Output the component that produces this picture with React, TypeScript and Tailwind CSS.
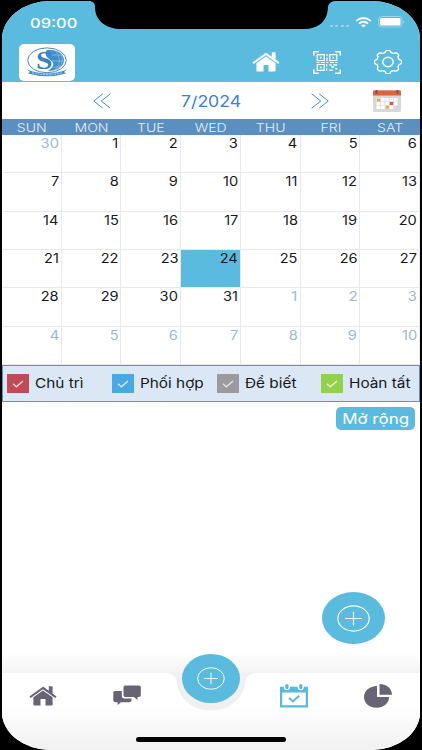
import React from 'react';

interface DayCellProps {
  day: number;
  outside: boolean;
  selected: boolean;
}

const WEEKDAYS = ['SUN', 'MON', 'TUE', 'WED', 'THU', 'FRI', 'SAT'];

const DAYS = Array.from({ length: 42 }, (_, i) => {
  if (i === 0) return { day: 30, outside: true };
  if (i > 31) return { day: i - 31, outside: true };
  return { day: i, outside: false };
});

const LEGEND = [
  { label: 'Chủ trì', color: 'bg-[#be4b55]', width: 'w-[104.5px]' },
  { label: 'Phối hợp', color: 'bg-[#4aa9e2]', width: 'w-[105px]' },
  { label: 'Để biết', color: 'bg-[#9b9b9d]', width: 'w-[104.5px]' },
  { label: 'Hoàn tất', color: 'bg-[#92d14b]', width: 'w-[96px]' },
];

// eight rounded teeth around a 28x24 ellipse
const GEAR_PATH = Array.from({ length: 120 }, (_, i) => {
  const angle = (i / 120) * Math.PI * 2;
  const r = 0.89 + 0.085 * Math.tanh(2 * Math.cos(8 * angle));
  return `${i === 0 ? 'M' : 'L'}${(14 + 14 * r * Math.cos(angle)).toFixed(2)} ${(12 + 12 * r * Math.sin(angle)).toFixed(2)}`;
}).join('') + 'Z';

const HomeIcon: React.FC<{ className?: string }> = ({ className }) => (
  <svg viewBox="0 0 28 20" preserveAspectRatio="none" className={className} fill="currentColor">
    <path d="M13.9 0.7 0.4 10.4l1.3 1.5L13.9 3.2l12.3 8.7 1.3-1.5-3.9-2.9V0.3h-3.8v4.4L15.1 1.2q-.6-.5-1.2-.5Z" />
    <path d="M13.9 4.6 4.4 11.3v7.1q0 1 1 1h6.1v-6.3h5v6.3h6.1q1 0 1-1v-7.1Z" />
  </svg>
);

const QrIcon: React.FC = () => (
  <svg viewBox="0 0 28 23" className="w-7 h-[23px]" fill="none" stroke="white">
    <path d="M.8 4.5V.8h5M22.2.8h5v3.7M.8 18.5v3.7h5M22.2 22.2h5v-3.7" strokeWidth="1.5" />
    <path d="M4.2 3.7h7v5.8h-7ZM16.8 3.7h7v5.8h-7ZM4.2 13.5h7v5.8h-7Z" strokeWidth="1.2" />
    <path d="M6.8 6.6h1.8M19.4 6.6h1.8M6.8 16.4h1.8" strokeWidth="1.6" />
    <path d="M14 3v2M14 6.5v3.4M3.6 11.5h3M8 11.5h4M13.2 11.5h2.3M17 11.5h4M22.5 11.5h1.9M13.7 13.3v2.3M13.7 17.2v2.5" strokeWidth="1.2" />
    <path d="M16.3 14h2.3M20.5 14h3.6M18.2 16h3M16.2 19.2h3.6M22.3 17.8h2" strokeWidth="1.5" />
  </svg>
);

const GearIcon: React.FC = () => (
  <svg viewBox="0 0 28 24" className="w-7 h-6" fill="none" stroke="white" strokeWidth="1.4">
    <path d={GEAR_PATH} strokeLinejoin="round" />
    <ellipse cx="14" cy="12" rx="5.3" ry="4.7" />
  </svg>
);

const ChatIcon: React.FC = () => (
  <svg viewBox="0 0 28 21" className="w-7 h-[21px]" fill="#686475">
    <path d="M2 6h6.8v5.1q0 2.3 2.4 2.3h7.3v1.8q0 2-2 2H8l-3.4 2.7v-2.7H2.3q-2 0-2-2V7.9Q.3 6 2 6Z" />
    <path d="M12.2.4h14q1.6 0 1.6 1.7v8.1q0 1.8-1.8 1.8h-1.5v2.9L20.8 12h-8.6q-1.7 0-1.7-1.8V2.1q0-1.7 1.7-1.7Z" />
  </svg>
);

const CalendarCheckIcon: React.FC = () => (
  <svg viewBox="0 0 28 24" className="w-7 h-6" fill="#57b9dd">
    <path fillRule="evenodd" d="M0 2.7h3.8v1q.5 2.5 3.1 2.5T10 3.7v-1h7.6v1q.5 2.5 3.2 2.5t3.1-2.5v-1H28v20.8H0ZM2.2 8.6v12.6h23.6V8.6Z" />
    <rect x="5.3" y="0" width="3.2" height="5.2" rx="1.6" />
    <rect x="19.2" y="0" width="3.2" height="5.2" rx="1.6" />
    <path d="m9 14 4 3.3 6.2-5.6" fill="none" stroke="#57b9dd" strokeWidth="2" />
  </svg>
);

const PieIcon: React.FC = () => (
  <svg viewBox="0 0 28 24" className="w-7 h-6" fill="#686475">
    <path d="M13 2v11h12.2c-.4 6.2-5.6 10.8-12.5 10.8C5.4 23.8 0 19.2 0 13 0 6.8 5.4 2.2 13 2Z" />
    <path d="M15.5 0c7 0 12.2 4.2 12.5 10.8H15.5Z" />
  </svg>
);

const PlusCircle: React.FC<{ className?: string }> = ({ className }) => (
  <svg viewBox="0 0 32 28" preserveAspectRatio="none" className={className} fill="none" stroke="white" strokeWidth="1.1">
    <ellipse cx="16" cy="14" rx="15.2" ry="13.1" />
    <path d="M8 14h16M16 7v14" />
  </svg>
);

const Logo: React.FC = () => (
  <svg viewBox="0 0 42 30" className="w-[42px] h-[30px] overflow-visible">
    <ellipse cx="21" cy="13.3" rx="19.3" ry="12.4" fill="white" stroke="#468bc5" strokeWidth="1" />
    <path d="M21 3c12-1 17 5 17 10.3S32 24 22 24c7-5 7-8 1-12Q17 7 21 3Z" fill="#408dcc" />
    <path d="M26 8h10M26 14h13M26 20h9M27 2c8 6 9 17 0 22M33 3c5 7 4 16-2 20" fill="none" stroke="#a9cee9" strokeWidth=".6" />
    <text x="10" y="22.2" textLength="16.5" lengthAdjust="spacingAndGlyphs" fontFamily="Liberation Serif, serif" fontWeight="bold" fontSize="26" fill="#3b82bd">S</text>
    <path d="M1 22.5q20 8 40 0l-3 2.5 2 1.5q-19 5.500-38 0L4 25Z" fill="#438ac2" />
    <path d="M6 25.8q15 4 30 0" fill="none" stroke="#b9d8ee" strokeWidth="1" strokeDasharray="2 .8" />
  </svg>
);

const CalendarIcon: React.FC = () => (
  <svg viewBox="0 0 28 22" className="w-7 h-[22px]">
    <rect width="28" height="22" rx="1.5" fill="#d5d8dc" />
    <path d="M0 5.5V1.5Q0 .5 1 .5h26q1 0 1 1v4Z" fill="#e3603c" />
    <path d="M3.5 0v3M24.5 0v3" stroke="#555c68" strokeWidth="1.8" strokeLinecap="round" />
    <path d="M8 8h16.5v7.5H21V19H3.5V8Z" fill="white" />
    <path d="M3.5 11.7h21M3.5 15.3H21M7.7 8v11M12 8v11M16.3 8v11M20.5 8v11" stroke="#d5d8dc" strokeWidth=".7" />
    <path d="M3.8 8.6h3.5v3H3.8ZM12.5 15.7H16v3h-3.5Z" fill="#eea557" />
    <path d="M16.7 12h3.5v3h-3.5Z" fill="#dc5936" />
  </svg>
);

const Chevrons: React.FC<{ className?: string }> = ({ className }) => (
  <svg viewBox="0 0 18 16" className={`w-[18px] h-4 ${className ?? ''}`} fill="none" stroke="#4289dd" strokeWidth="1">
    <path d="M9.8.8.8 8l9 7.2M17.3.8l-9 7.2 9 7.2" />
  </svg>
);

const StatusBar: React.FC = () => (
  <div className="h-[42px] flex items-start justify-between pl-7 pr-[15px] pt-[12px] text-white">
    <span className="inline-block origin-left scale-x-[1.22] text-[13.5px] leading-5 font-medium">09:00</span>
    <div className="flex items-center gap-[6px] h-4 mt-px">
      <div className="flex gap-[2.5px] mt-[7px]">
        {[0, 1, 2, 3].map((dot) => (
          <span key={dot} className="w-[3px] h-[2px] rounded-full bg-white/40" />
        ))}
      </div>
      <svg viewBox="0 0 18 12" className="w-[17px] h-[11px]" fill="none" stroke="white" strokeWidth="2">
        <path d="M1 4.2Q9-2 17 4.2M4 7.2q5-4 10 0" />
        <path d="M6.3 9.1Q9 7 11.7 9.1L9 11.5Z" fill="white" stroke="none" />
      </svg>
      <svg viewBox="0 0 27 12" className="w-[27px] h-3">
        <rect x=".5" y=".5" width="23.5" height="10.5" rx="3" fill="none" stroke="white" strokeOpacity=".4" />
        <rect x="2" y="2" width="20.5" height="7.5" rx="1.5" fill="white" />
        <path d="M25.3 4q1.5 2 0 4Z" fill="white" fillOpacity=".6" />
      </svg>
    </div>
  </div>
);

const DayCell: React.FC<DayCellProps> = ({ day, outside, selected }) => (
  <div className={`border-r border-b border-[#e9e9eb] pt-px pr-[2px] text-right text-[12.7px] leading-[15px] ${outside ? 'text-[#9bb9d2]' : 'text-[#18191c]'} ${selected ? 'bg-[#5bbbde]' : ''}`}>
    <span className="inline-block origin-right scale-x-[1.15]">{day}</span>
  </div>
);

const BottomNav: React.FC = () => (
  <div className="relative h-[77px]">
    <svg viewBox="0 0 418 77" className="absolute inset-0 w-full h-full">
      <defs>
        <linearGradient id="bar" x1="0" y1="0" x2="0" y2="1">
          <stop offset="0.4" stopColor="#fff" />
          <stop offset="1" stopColor="#f1f1f1" />
        </linearGradient>
      </defs>
      <rect y="0" width="418" height="50" fill="#f0f0f1" />
      <path d="M0 0h163q10 0 11.5 8c2 18 16 29.500 34.500 29.500s32.500-11.500 34.500-29.500q1.500-8 11.500-8h163v77H0Z" fill="url(#bar)" />
    </svg>
    <button className="absolute left-[179.500px] top-[-19px] w-[58px] h-[49px] rounded-[50%] bg-[#5bbbde] flex items-center justify-center">
      <PlusCircle className="w-[28px] h-[23px]" />
    </button>
    <div className="relative flex items-start h-[64px] pt-[11px] pl-[27px] text-[#686475]">
      <button className="mt-[2px] mr-[56px]"><HomeIcon className="w-7 h-5" /></button>
      <button className="mt-px mr-[139px]"><ChatIcon /></button>
      <button className="mr-[56px]"><CalendarCheckIcon /></button>
      <button><PieIcon /></button>
    </div>
    <div className="relative w-[150px] h-[5px] mx-auto rounded-full bg-black" />
  </div>
);

export default function App() {
  return (
    <div className="w-[422px] h-[750px] bg-black px-[2px] pt-px overflow-hidden font-['Inter',sans-serif]">
      <div className="relative h-[749px] flex flex-col bg-white overflow-hidden rounded-[48px/38px]">
        {/* notch */}
        <svg viewBox="0 0 245 28" className="absolute left-[89px] top-0 w-[245px] h-7">
          <path d="M0 0h245q-6 0-8 5C237 20 228 28 212 28H31C15 28 4 20 4 6Q4 0-2 0Z" />
        </svg>

        <header className="h-[81px] shrink-0 bg-[#5bbbde]">
          <StatusBar />
          <div className="flex items-center h-[38px] pl-[17px] pr-[18px]">
            <div className="w-[56px] h-[37px] rounded-[5px] bg-white flex items-center justify-center">
              <Logo />
            </div>
            <div className="ml-auto flex items-center text-white gap-[33px]">
              <HomeIcon className="w-7 h-5" />
              <QrIcon />
              <GearIcon />
            </div>
          </div>
        </header>

        <div className="h-[37px] shrink-0 flex items-center pl-[91px] pr-[19px]">
          <Chevrons />
          <span className="w-[200px] pt-[3px] text-center text-[15.3px] text-[#3b7ddb]">
            <span className="inline-block scale-x-[1.15]">7/2024</span>
          </span>
          <Chevrons className="-scale-x-100" />
          <span className="ml-auto"><CalendarIcon /></span>
        </div>

        <div className="h-4 shrink-0 grid grid-cols-7 bg-[#5b8fbf] text-[#e5eef6] text-center text-[12px] leading-[17px] font-light">
          {WEEKDAYS.map((name) => (
            <span key={name}><span className="inline-block scale-x-[1.17]">{name}</span></span>
          ))}
        </div>

        <div className="h-[230px] shrink-0 grid grid-cols-7 grid-rows-6">
          {DAYS.map((item, index) => (
            <DayCell key={index} day={item.day} outside={item.outside} selected={index === 24} />
          ))}
        </div>

        <div className="h-[37px] shrink-0 flex items-center pl-1 bg-[#dbe7f4] border-[1.5px] border-[#5f90d5] text-[13px] text-[#15171a]">
          {LEGEND.map((item) => (
            <div key={item.label} className={`flex items-center shrink-0 ${item.width}`}>
              <span className={`w-[22px] h-[19px] flex items-center justify-center ${item.color}`}>
                <svg viewBox="0 0 12 8" className="w-3 h-2" fill="none" stroke="white" strokeOpacity=".75" strokeWidth="1.3">
                  <path d="m1 3.8 3.3 3L11 1" />
                </svg>
              </span>
              <span className="ml-[6px] mt-px inline-block origin-left scale-x-[1.18] whitespace-nowrap">{item.label}</span>
            </div>
          ))}
        </div>

        <div className="flex justify-end pt-[5px] pr-[5px]">
          <button className="w-[79px] h-[23px] rounded-[5px] bg-[#5bbbde] text-white text-[14.5px] leading-[24px]">
            <span className="inline-block scale-x-[1.17] whitespace-nowrap">Mở rộng</span>
          </button>
        </div>

        <main className="flex-1 flex flex-col">
          <div className="mt-auto mb-[9px] mr-[35px] flex justify-end">
            <button className="w-[63px] h-[52px] rounded-[50%] bg-[#5bbbde] flex items-center justify-center">
              <PlusCircle className="w-[33px] h-[27px]" />
            </button>
          </div>
          <div className="h-[20px] bg-linear-to-b from-white to-[#f3f3f4]" />
        </main>

        <BottomNav />
      </div>
    </div>
  );
}
